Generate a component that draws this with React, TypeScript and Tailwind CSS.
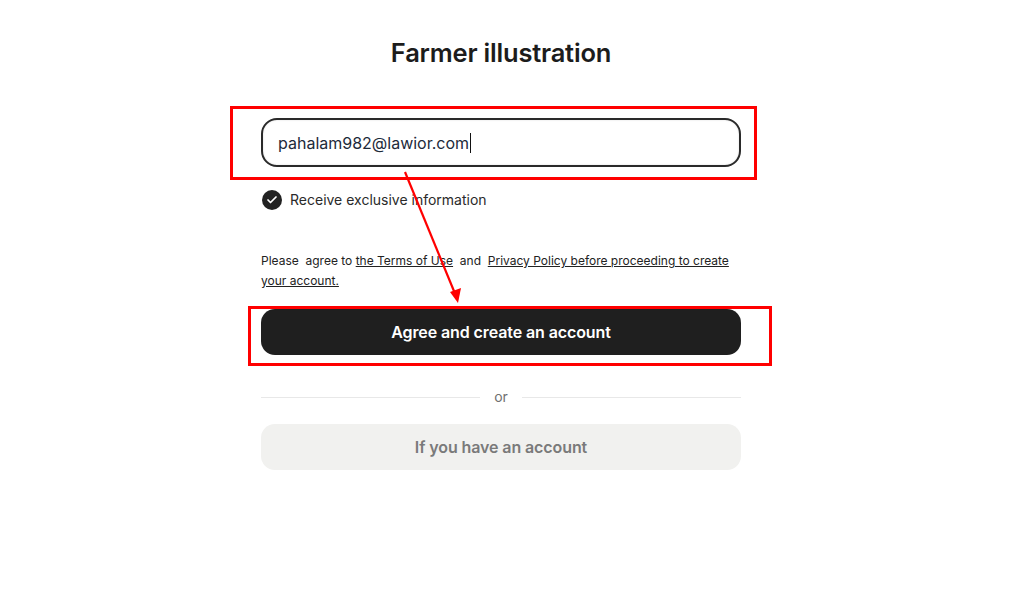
import { Check } from "lucide-react";

export default function App() {
  return (
    <div className="relative min-h-[589px] w-full bg-white font-['Inter','Liberation_Sans',sans-serif] text-[#222]">
      <div className="flex justify-center pr-[8px]">
        <div className="flex w-[480px] flex-col">
          {/* Title */}
          <h1 className="mt-[36px] text-center text-[25.5px] font-semibold leading-[34px] tracking-[-0.2px] text-[#1c1c1c]">
            Farmer illustration
          </h1>

          {/* Email field */}
          <div className="relative mt-[48px]">
            <div className="absolute -left-[31px] -right-[16px] -top-[12px] -bottom-[13px] border-[3px] border-[#ff0000]" />
            <div className="relative flex h-[49px] items-center rounded-[16px] border-2 border-[#2a2a2a] pl-[15px] pr-[16px] text-[16px] text-[#1d2a3a] shadow-[inset_0_0_2px_rgba(0,0,0,0.15)]">
              pahalam982@lawior.com
              <span className="ml-[1px] h-[20px] w-px bg-[#111]" />
            </div>
          </div>

          {/* Checkbox */}
          <div className="mt-[22px] flex items-center gap-[8px] pl-[1px]">
            <span className="flex h-[20px] w-[20px] items-center justify-center rounded-full bg-[#222]">
              <Check className="h-[12px] w-[12px] text-white" strokeWidth={3.5} />
            </span>
            <span className="text-[14px] text-[#2a2a2a]">Receive exclusive information</span>
          </div>

          {/* Terms */}
          <p className="mt-[41px] text-[12px] leading-[20px] text-[#222]">
            Please&nbsp; agree to <span className="underline">the Terms of Use</span>&nbsp; and&nbsp;{" "}
            <span className="underline">Privacy Policy before proceeding to create your account.</span>
          </p>

          {/* Primary button */}
          <div className="relative mt-[18px]">
            <div className="absolute -left-[13px] -right-[31px] -top-[3px] -bottom-[11px] border-[3px] border-[#ff0000]" />
            <button className="relative flex h-[46px] w-full items-center justify-center rounded-[14px] bg-[#1f1f1f] text-[16px] font-semibold tracking-[-0.1px] text-white">
              Agree and create an account
            </button>
          </div>

          {/* Divider */}
          <div className="mt-[33px] flex items-center gap-[12px]">
            <div className="h-px flex-1 bg-[#e8e8e8]" />
            <span className="px-[2px] text-[14px] leading-[18px] text-[#707070]">or</span>
            <div className="h-px flex-1 bg-[#e8e8e8]" />
          </div>

          {/* Secondary button */}
          <button className="mt-[18px] flex h-[46px] w-full items-center justify-center rounded-[14px] bg-[#f1f1ef] text-[16px] font-semibold tracking-[-0.1px] text-[#7a7a7a]">
            If you have an account
          </button>
        </div>
      </div>

      {/* Annotation arrow */}
      <svg className="pointer-events-none absolute left-0 top-0" width="1010" height="589">
        <line x1="405" y1="172" x2="456" y2="296" stroke="#ff0000" strokeWidth="2.2" />
        <polygon points="458,303 450,292 461,288" fill="#ff0000" />
      </svg>
    </div>
  );
}
